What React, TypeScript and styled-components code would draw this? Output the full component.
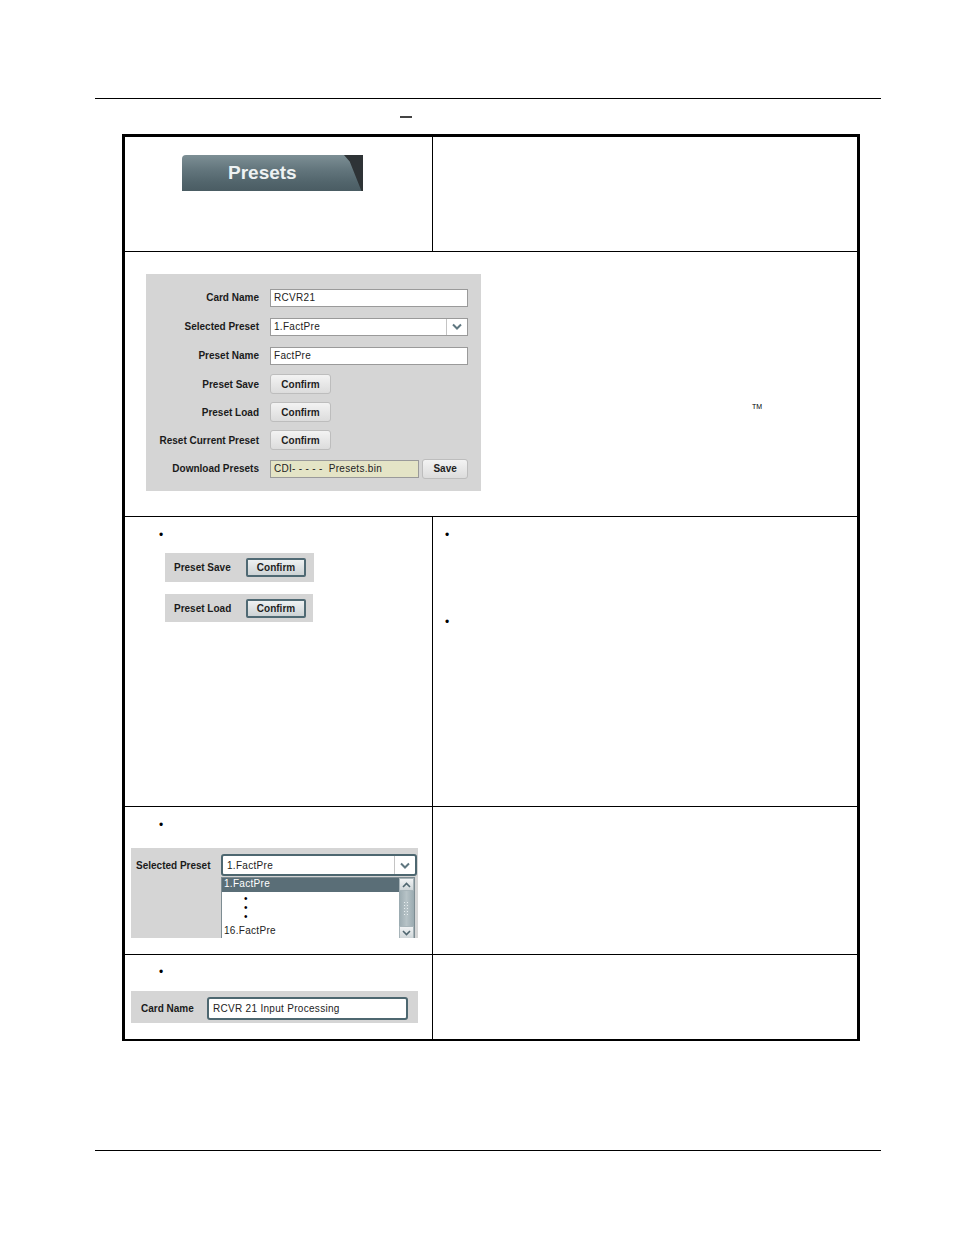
import React from "react";
import styled, { createGlobalStyle } from "styled-components";

const Global = createGlobalStyle`
  html, body { margin: 0; padding: 0; background: #fff; }
  body { font-family: "Liberation Sans", Arial, sans-serif; color: #000; }
`;

const Page = styled.div`
  width: 954px;
  height: 1235px;
  box-sizing: border-box;
  padding: 98px 73px 0 95px;
`;

const Rule = styled.div<{ $gap?: number }>`
  height: 1px;
  background: #000;
  margin-top: ${(p) => p.$gap ?? 0}px;
`;

const Caption = styled.div`
  height: 35px;
  box-sizing: border-box;
  padding: 17px 0 0 305px;
`;

const Dash = styled.span`
  display: block;
  width: 12px;
  height: 2px;
  background: #444;
`;

const Table = styled.div`
  margin-left: 27px;
  width: 738px;
  box-sizing: border-box;
  border: 3px solid #000;
  border-bottom-width: 2px;
  display: grid;
  grid-template-columns: 308px 424px;
  grid-template-rows: 114px 265px 290px 148px 85px;
`;

const Cell = styled.div<{ $right?: boolean; $top?: boolean; $span?: boolean }>`
  box-sizing: border-box;
  border-top: ${(p) => (p.$top ? "1px solid #000" : "none")};
  border-right: ${(p) => (p.$right ? "1px solid #000" : "none")};
  grid-column: ${(p) => (p.$span ? "1 / 3" : "auto")};
  display: flex;
  flex-direction: column;
  align-items: flex-start;
`;

const TabCell = styled(Cell)`
  padding: 18px 0 0 57px;
`;

const Tab = styled.div`
  position: relative;
  width: 181px;
  height: 36px;
  box-sizing: border-box;
  padding: 0 0 0 46px;
  display: flex;
  align-items: center;
  border-radius: 4px 0 0 0;
  background: linear-gradient(#7d8f95 0%, #63767d 40%, #52656c 75%, #4a5c63 100%);
  color: #eef2f3;
  font: bold 19px "Liberation Sans", Arial, sans-serif;
  overflow: hidden;
  &::after {
    content: "";
    position: absolute;
    top: 0;
    right: 0;
    width: 19px;
    height: 100%;
    background: #2e3336;
    clip-path: polygon(0 0, 100% 0, 100% 100%, 92% 100%, 30% 18%);
  }
`;

const WideCell = styled(Cell)`
  flex-direction: row;
  padding: 22px 0 0 21px;
`;

const Note = styled.span`
  margin: 129px 0 0 271px;
  font-size: 7px;
  line-height: 8px;
`;

const Panel = styled.div`
  width: 335px;
  height: 217px;
  box-sizing: border-box;
  background: #d5d5d5;
  padding: 9px 13px 0 10px;
  display: grid;
  grid-template-columns: 103px 198px;
  column-gap: 11px;
  grid-template-rows: 29px 29px 29px 28px 28px 28px 29px;
  align-items: center;
`;

const Label = styled.span`
  font: bold 10px "Liberation Sans", Arial, sans-serif;
  color: #1b1b1b;
  text-align: right;
  white-space: nowrap;
`;

const PanelLabel = styled(Label)`
  text-align: left;
  align-self: center;
`;

const Field = styled.div<{ $tint?: boolean; $w?: number }>`
  width: ${(p) => p.$w ?? 198}px;
  height: 18px;
  box-sizing: border-box;
  border: 1px solid #9a9a9a;
  background: ${(p) => (p.$tint ? "#e4e4c6" : "#fff")};
  padding-left: 3px;
  display: flex;
  align-items: center;
  font: 10px "Liberation Sans", Arial, sans-serif;
  letter-spacing: 0.3px;
  color: #222;
  white-space: nowrap;
`;

const SelectField = styled(Field)`
  justify-content: space-between;
`;

const ChevBox = styled.span`
  width: 20px;
  height: 100%;
  border-left: 1px solid #c4c4c4;
  display: flex;
  align-items: center;
  justify-content: center;
`;

const Button = styled.button<{ $w?: number }>`
  width: ${(p) => p.$w ?? 61}px;
  height: 20px;
  padding: 0;
  margin: 0;
  border: 1px solid #bdbdbd;
  border-radius: 3px;
  background: linear-gradient(#f3f3f3, #dcdcdc);
  font: bold 10px "Liberation Sans", Arial, sans-serif;
  color: #1e1e1e;
`;

const DownloadRow = styled.div`
  display: flex;
  align-items: center;
  gap: 3px;
`;

const LeftCell = styled(Cell)<{ $pt: number }>`
  padding: ${(p) => p.$pt}px 0 0 0;
`;

const Bullet = styled.span<{ $gap?: number }>`
  display: block;
  height: 12px;
  line-height: 12px;
  font-size: 12px;
  padding-left: 34px;
  margin-top: ${(p) => p.$gap ?? 0}px;
`;

const RightBullet = styled(Bullet)`
  padding-left: 12px;
`;

const MiniPanel = styled.div<{ $w: number; $h: number; $gap: number }>`
  width: ${(p) => p.$w}px;
  height: ${(p) => p.$h}px;
  margin: ${(p) => p.$gap}px 0 0 40px;
  box-sizing: border-box;
  background: #d5d5d5;
  padding-left: 9px;
  display: grid;
  grid-template-columns: 72px auto;
  align-items: center;
`;

const FocusButton = styled.button`
  width: 60px;
  height: 19px;
  padding: 0;
  margin: 0;
  border: 2px solid #4f6973;
  border-radius: 2px;
  background: linear-gradient(#eef1f2, #cdd3d5);
  font: bold 10px "Liberation Sans", Arial, sans-serif;
  color: #1e1e1e;
`;

const ListPanel = styled.div<{ $gap: number }>`
  width: 287px;
  height: 90px;
  margin: ${(p) => p.$gap}px 0 0 6px;
  box-sizing: border-box;
  background: #d5d5d5;
  padding: 6px 0 0 5px;
  display: grid;
  grid-template-columns: 85px 196px;
  grid-template-rows: 22px auto;
  overflow: hidden;
`;

const FocusSelect = styled.div`
  box-sizing: border-box;
  height: 22px;
  border: 2px solid #4d6770;
  border-radius: 3px;
  background: #fff;
  display: flex;
  align-items: center;
  justify-content: space-between;
  padding-left: 4px;
  font: 10px "Liberation Sans", Arial, sans-serif;
  letter-spacing: 0.3px;
  color: #222;
`;

const List = styled.div`
  grid-column: 2;
  margin-top: 1px;
  width: 194px;
  height: 62px;
  box-sizing: border-box;
  border: 1px solid #7d8c92;
  border-bottom: none;
  background: #fff;
  display: flex;
`;

const Items = styled.div`
  flex: 1;
  display: flex;
  flex-direction: column;
  overflow: hidden;
`;

const Item = styled.div<{ $sel?: boolean; $gap?: number }>`
  flex: none;
  height: 14px;
  line-height: 14px;
  padding-left: 2px;
  margin-top: ${(p) => p.$gap ?? 0}px;
  background: ${(p) => (p.$sel ? "#5a6e77" : "transparent")};
  color: ${(p) => (p.$sel ? "#fff" : "#222")};
  font: 10px "Liberation Sans", Arial, sans-serif;
  letter-spacing: 0.3px;
`;

const DotRow = styled.div<{ $gap?: number }>`
  flex: none;
  height: 9px;
  line-height: 9px;
  padding-left: 22px;
  font-size: 10px;
  margin-top: ${(p) => p.$gap ?? 0}px;
`;

const Scroll = styled.div`
  width: 15px;
  display: flex;
  flex-direction: column;
  background: #8d9ea5;
`;

const ScrollBtn = styled.div`
  flex: none;
  height: 13px;
  box-sizing: border-box;
  border: 1px solid #a7b4b9;
  background: linear-gradient(#f1f3f4, #cfd6d9);
  display: flex;
  align-items: center;
  justify-content: center;
`;

const Thumb = styled.div`
  flex: 1;
  display: flex;
  align-items: center;
  justify-content: center;
  background: linear-gradient(90deg, #9aaab0, #b7c3c7, #9aaab0);
`;

const Grip = styled.div`
  width: 7px;
  height: 16px;
  background-image: radial-gradient(circle, #e8eef0 0.8px, transparent 1px);
  background-size: 3px 3px;
`;

const NamePanel = styled.div<{ $gap: number }>`
  width: 287px;
  height: 32px;
  margin: ${(p) => p.$gap}px 0 0 6px;
  box-sizing: border-box;
  background: #d5d5d5;
  padding: 6px 0 0 10px;
  display: grid;
  grid-template-columns: 66px 201px;
  grid-template-rows: 23px;
`;

const FocusInput = styled.div`
  box-sizing: border-box;
  height: 23px;
  border: 2px solid #4d6770;
  border-radius: 3px;
  background: #fff;
  display: flex;
  align-items: center;
  padding-left: 4px;
  font: 10px "Liberation Sans", Arial, sans-serif;
  letter-spacing: 0.3px;
  color: #222;
`;

const Chevron = () => (
  <svg width="10" height="7" viewBox="0 0 10 7">
    <path d="M1 1.5 L5 5.5 L9 1.5" fill="none" stroke="#5f7780" strokeWidth="2" />
  </svg>
);

const SmallChevron = ({ up = false }: { up?: boolean }) => (
  <svg width="9" height="6" viewBox="0 0 9 6">
    <path
      d={up ? "M1 5 L4.5 1.5 L8 5" : "M1 1 L4.5 4.5 L8 1"}
      fill="none"
      stroke="#4f6670"
      strokeWidth="1.6"
    />
  </svg>
);

export default function App() {
  return (
    <Page>
      <Global />
      <Rule />
      <Caption>
        <Dash />
      </Caption>
      <Table>
        <TabCell $right>
          <Tab>Presets</Tab>
        </TabCell>
        <Cell />

        <WideCell $top $span>
          <Panel>
            <Label>Card Name</Label>
            <Field>RCVR21</Field>
            <Label>Selected Preset</Label>
            <SelectField>
              1.FactPre
              <ChevBox>
                <Chevron />
              </ChevBox>
            </SelectField>
            <Label>Preset Name</Label>
            <Field>FactPre</Field>
            <Label>Preset Save</Label>
            <Button>Confirm</Button>
            <Label>Preset Load</Label>
            <Button>Confirm</Button>
            <Label>Reset Current Preset</Label>
            <Button>Confirm</Button>
            <Label>Download Presets</Label>
            <DownloadRow>
              <Field $tint $w={150}>CDI- - - - -&nbsp; Presets.bin</Field>
              <Button $w={46}>Save</Button>
            </DownloadRow>
          </Panel>
          <Note>TM</Note>
        </WideCell>

        <LeftCell $top $right $pt={12}>
          <Bullet>•</Bullet>
          <MiniPanel $w={149} $h={29} $gap={12}>
            <PanelLabel>Preset Save</PanelLabel>
            <FocusButton>Confirm</FocusButton>
          </MiniPanel>
          <MiniPanel $w={148} $h={28} $gap={12}>
            <PanelLabel>Preset Load</PanelLabel>
            <FocusButton>Confirm</FocusButton>
          </MiniPanel>
        </LeftCell>
        <LeftCell $top $pt={12}>
          <RightBullet>•</RightBullet>
          <RightBullet $gap={75}>•</RightBullet>
        </LeftCell>

        <LeftCell $top $right $pt={12}>
          <Bullet>•</Bullet>
          <ListPanel $gap={17}>
            <PanelLabel>Selected Preset</PanelLabel>
            <FocusSelect>
              1.FactPre
              <ChevBox>
                <Chevron />
              </ChevBox>
            </FocusSelect>
            <List>
              <Items>
                <Item $sel>1.FactPre</Item>
                <DotRow $gap={2}>•</DotRow>
                <DotRow>•</DotRow>
                <DotRow>•</DotRow>
                <Item $gap={4}>16.FactPre</Item>
              </Items>
              <Scroll>
                <ScrollBtn>
                  <SmallChevron up />
                </ScrollBtn>
                <Thumb>
                  <Grip />
                </Thumb>
                <ScrollBtn>
                  <SmallChevron />
                </ScrollBtn>
              </Scroll>
            </List>
          </ListPanel>
        </LeftCell>
        <Cell $top />

        <LeftCell $top $right $pt={11}>
          <Bullet>•</Bullet>
          <NamePanel $gap={13}>
            <PanelLabel>Card Name</PanelLabel>
            <FocusInput>RCVR 21 Input Processing</FocusInput>
          </NamePanel>
        </LeftCell>
        <Cell $top />
      </Table>
      <Rule $gap={109} />
    </Page>
  );
}
